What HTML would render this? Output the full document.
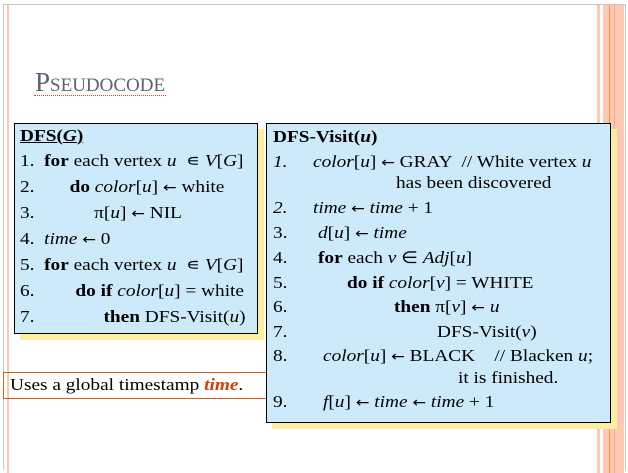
<!DOCTYPE html><html><head><style>
body{margin:0;width:628px;height:473px;background:#fff;position:relative;overflow:hidden;font-family:"Liberation Serif",serif;font-size:16.5px;color:#000}
.a{position:absolute}
.box{position:absolute;background:#cdeafb;border:1.5px solid #000;box-shadow:6px 6px 0 #fdeea0}
.l{position:absolute;white-space:nowrap;transform:scaleX(1.17);transform-origin:0 0}
i{font-style:italic}
.ar{font-family:"DejaVu Sans",sans-serif;font-size:14px}
</style></head><body>
<div class="a" style="left:3px;top:4px;width:621px;height:465px;border:1px solid #c8c8c8;border-bottom:none"></div>
<div class="a" style="left:7px;top:5px;width:2px;height:468px;background:#fcc9b4"></div>
<div class="a" style="left:597px;top:5px;width:3px;height:468px;background:#fcc9b4"></div>
<div class="a" style="left:603px;top:5px;width:21px;height:468px;background:#fcc9b4"></div>
<div class="a" style="left:609px;top:5px;width:1px;height:468px;background:#f08a50"></div>
<div class="a" style="left:614px;top:5px;width:1px;height:468px;background:#f8b090"></div>
<div class="a" style="left:35px;top:67px;white-space:nowrap;font-size:27px;color:#5a6474">P<span style="font-size:19px">SEUDOCODE</span></div>
<div class="a" style="left:34px;top:93px;width:132px;height:2px;border-bottom:1px dotted #e33"></div>

<div class="box" style="left:14px;top:123px;width:242px;height:209px"></div>
<div class="l" style="left:20px;top:126px;font-weight:bold;text-decoration:underline">DFS(<i>G</i>)</div>
<div class="l" style="left:20px;top:151px">1.&nbsp; <b>for</b> each vertex <i>u</i> &nbsp;∊ <i>V</i>[<i>G</i>]</div>
<div class="l" style="left:20px;top:177px">2.<span style="padding-left:30px"></span><b>do</b> <i>color</i>[<i>u</i>] <span class="ar">←</span> white</div>
<div class="l" style="left:20px;top:203px">3.<span style="padding-left:51px"></span>π[<i>u</i>] <span class="ar">←</span> NIL</div>
<div class="l" style="left:20px;top:229px">4.&nbsp; <i>time</i> <span class="ar">←</span> 0</div>
<div class="l" style="left:20px;top:255px">5.&nbsp; <b>for</b> each vertex <i>u</i> &nbsp;∊ <i>V</i>[<i>G</i>]</div>
<div class="l" style="left:20px;top:281px">6.<span style="padding-left:35px"></span><b>do if</b> <i>color</i>[<i>u</i>] = white</div>
<div class="l" style="left:20px;top:307px">7.<span style="padding-left:59px"></span><b>then</b> DFS-Visit(<i>u</i>)</div>

<div class="a" style="left:3px;top:372px;width:265px;height:27px;border:1px solid #d0601a;box-sizing:border-box"></div>
<div class="l" style="left:10px;top:375px">Uses a global timestamp <b style="color:#d0400a"><i>time</i></b>.</div>

<div class="box" style="left:266px;top:123px;width:343px;height:298px"></div>
<div class="l" style="left:273px;top:127px;font-weight:bold">DFS-Visit(<i>u</i>)</div>
<div class="l" style="left:273px;top:152px"><i>1.</i></div><div class="l" style="left:313px;top:152px"><i>color</i>[<i>u</i>] <span class="ar">←</span> GRAY &nbsp;// White vertex <i>u</i></div>
<div class="l" style="left:396px;top:173px">has been discovered</div>
<div class="l" style="left:273px;top:198px"><i>2.</i></div><div class="l" style="left:313px;top:198px"><i>time</i> <span class="ar">←</span> <i>time</i> + 1</div>
<div class="l" style="left:273px;top:223px">3.</div><div class="l" style="left:318px;top:223px"><i>d</i>[<i>u</i>] <span class="ar">←</span> <i>time</i></div>
<div class="l" style="left:273px;top:248px">4.</div><div class="l" style="left:318px;top:248px"><b>for</b> each <i>v</i> ∈ <i>Adj</i>[<i>u</i>]</div>
<div class="l" style="left:273px;top:273px">5.</div><div class="l" style="left:347px;top:273px"><b>do if</b> <i>color</i>[<i>v</i>] = WHITE</div>
<div class="l" style="left:273px;top:297px">6.</div><div class="l" style="left:394px;top:297px"><b>then</b> π[<i>v</i>] <span class="ar">←</span> <i>u</i></div>
<div class="l" style="left:273px;top:322px">7.</div><div class="l" style="left:437px;top:322px">DFS-Visit(<i>v</i>)</div>
<div class="l" style="left:273px;top:346px">8.</div><div class="l" style="left:323px;top:346px"><i>color</i>[<i>u</i>] <span class="ar">←</span> BLACK &nbsp;&nbsp; // Blacken <i>u</i>;</div>
<div class="l" style="left:458px;top:368px">it is finished.</div>
<div class="l" style="left:273px;top:392px">9.</div><div class="l" style="left:323px;top:392px"><i>f</i>[<i>u</i>] <span class="ar">←</span> <i>time</i> <span class="ar">←</span> <i>time</i> + 1</div>
</body></html>
